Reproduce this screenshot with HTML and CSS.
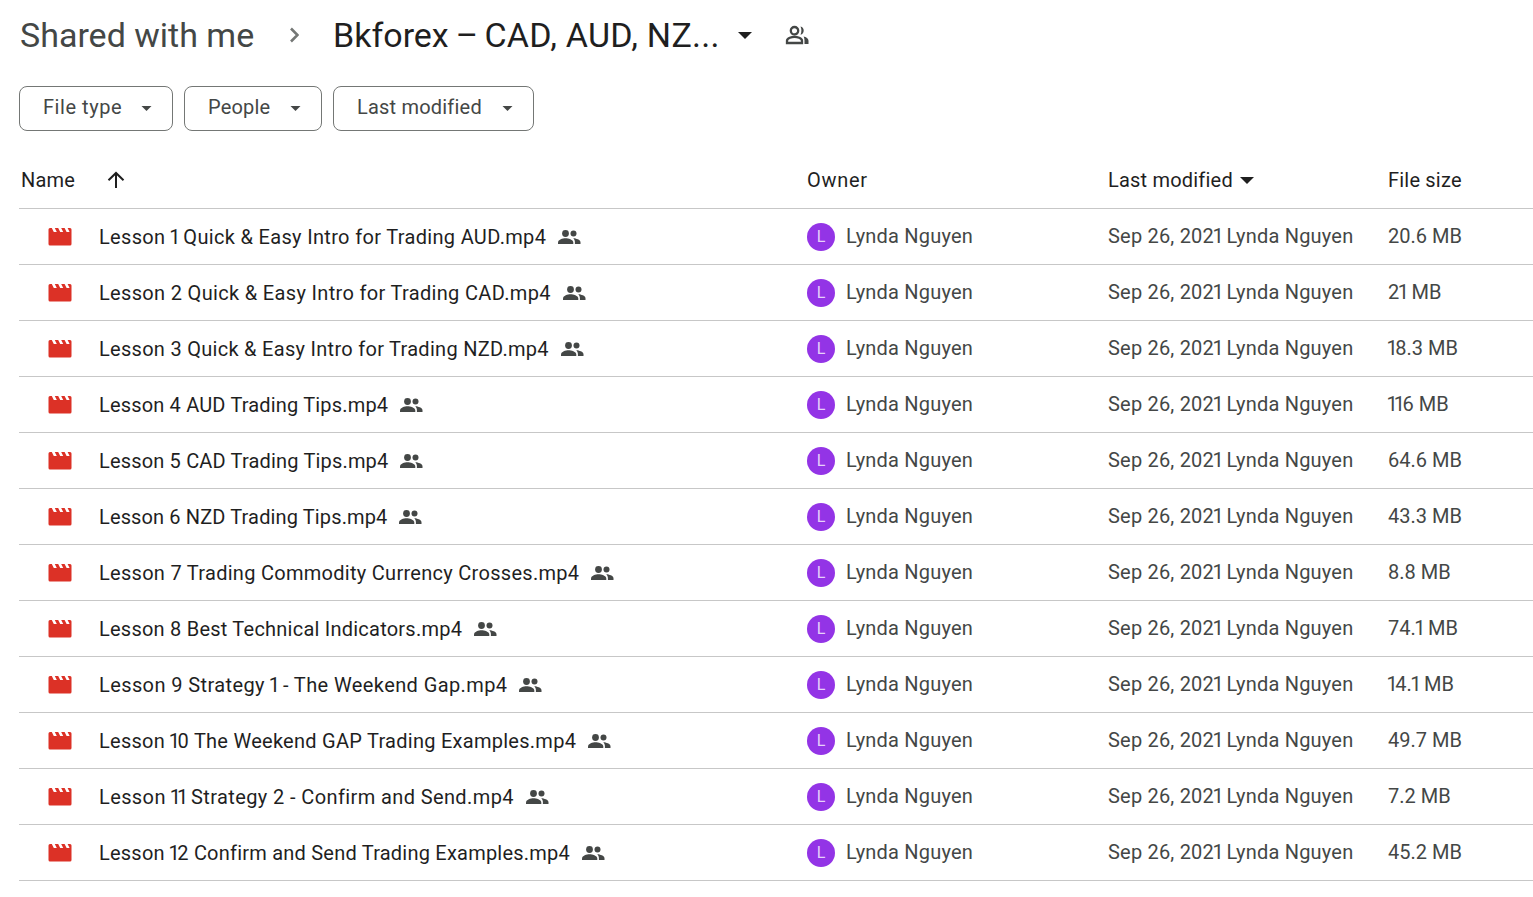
FILE: index.html
```html
<!DOCTYPE html>
<html lang="en">
<head>
<meta charset="utf-8">
<title>Bkforex – CAD, AUD, NZ…</title>
<link rel="stylesheet" href="styles.css">
</head>
<body>
<svg class="defs" width="0" height="0" aria-hidden="true">
  <symbol id="clap" viewBox="0 0 24 18"><path d="M2 0h1.800l2 4h3L6.800 0h3.400l2 4h3L13.200 0h3.400l2 4h3L19.600 0H22a1.500 1.500 0 0 1 1.500 1.500V16a1.500 1.500 0 0 1-1.500 1.500H2A1.500 1.500 0 0 1 .5 16V1.500A1.500 1.500 0 0 1 2 0z"/></symbol>
  <symbol id="group" viewBox="0 0 24 24"><circle cx="8.500" cy="8.500" r="3.400"/><circle cx="16.500" cy="8.500" r="3"/><path d="M1 19v-1.600C1 14.800 5.800 13.300 8.500 13.300s7.800 1.500 7.800 4.100V19z"/><path d="M16.200 13.300c2.800.1 7.300 1.400 7.300 4V19h-5.600v-1.800c0-1.500-.6-2.800-1.700-3.900z"/></symbol>
  <symbol id="caret" viewBox="0 0 10 5"><path d="M0 0h10L5 5z"/></symbol>
</svg>
<main class="page">
  <header class="crumbs">
    <span class="crumb-root">Shared with me</span>
    <svg class="crumb-sep" viewBox="0 0 10 16"><path d="M2 1.500 8.500 8 2 14.500" fill="none" stroke="currentColor" stroke-width="2.600"/></svg>
    <span class="crumb-current">Bkforex <span class="dash">–</span> <span class="tail">CAD, AUD, NZ...</span></span>
    <svg class="crumb-caret"><use href="#caret"/></svg>
    <svg class="crumb-people" viewBox="0 0 24 24"><path d="M9.500 4a3.700 3.700 0 1 1 0 7.400 3.700 3.700 0 0 1 0-7.400zM2 20v-2.200c0-2.800 5-4 7.500-4s7.500 1.200 7.500 4V20z" fill="none" stroke="currentColor" stroke-width="2.300"/><path d="M15.500 3.600c4.300.4 4.300 7.800 0 8.200 1.200-2.400 1.200-5.800 0-8.200zM18.500 13.500c2.800.6 5 1.900 5 4.300V21h-4v-3.500c0-1.500-.3-3-1-4z"/></svg>
  </header>
  <div class="filters">
    <button class="chip chip-type">File type<svg class="chip-caret"><use href="#caret"/></svg></button>
    <button class="chip chip-people">People<svg class="chip-caret"><use href="#caret"/></svg></button>
    <button class="chip chip-mod">Last modified<svg class="chip-caret"><use href="#caret"/></svg></button>
  </div>
  <section class="list">
    <div class="row head">
      <div class="hname"><span class="htext">Name</span><svg class="sort" viewBox="0 0 18 18"><path d="M9 17V2M1.500 9.200 9 2l7.500 7.200" fill="none" stroke="currentColor" stroke-width="2"/></svg></div>
      <div><span class="htext howner">Owner</span></div>
      <div class="hmod"><span class="htext">Last modified</span><svg class="hcaret"><use href="#caret"/></svg></div>
      <div><span class="htext">File size</span></div>
    </div>
    <div class="row"><div class="name"><svg class="clap"><use href="#clap"/></svg><span class="fname">Lesson <span class="one">1</span> Quick &amp; Easy Intro for Trading AUD.mp4</span><svg class="shared"><use href="#group"/></svg></div><div class="owner"><span class="avatar">L</span><span class="oname">Lynda Nguyen</span></div><div class="cell">Sep 26, 202<span class="one">1</span> Lynda Nguyen</div><div class="cell size">20.6 MB</div></div>
    <div class="row"><div class="name"><svg class="clap"><use href="#clap"/></svg><span class="fname">Lesson 2 Quick &amp; Easy Intro for Trading CAD.mp4</span><svg class="shared"><use href="#group"/></svg></div><div class="owner"><span class="avatar">L</span><span class="oname">Lynda Nguyen</span></div><div class="cell">Sep 26, 202<span class="one">1</span> Lynda Nguyen</div><div class="cell size">2<span class="one">1</span> MB</div></div>
    <div class="row"><div class="name"><svg class="clap"><use href="#clap"/></svg><span class="fname">Lesson 3 Quick &amp; Easy Intro for Trading NZD.mp4</span><svg class="shared"><use href="#group"/></svg></div><div class="owner"><span class="avatar">L</span><span class="oname">Lynda Nguyen</span></div><div class="cell">Sep 26, 202<span class="one">1</span> Lynda Nguyen</div><div class="cell size"><span class="one">1</span>8.3 MB</div></div>
    <div class="row"><div class="name"><svg class="clap"><use href="#clap"/></svg><span class="fname">Lesson 4 AUD Trading Tips.mp4</span><svg class="shared"><use href="#group"/></svg></div><div class="owner"><span class="avatar">L</span><span class="oname">Lynda Nguyen</span></div><div class="cell">Sep 26, 202<span class="one">1</span> Lynda Nguyen</div><div class="cell size"><span class="one">1</span><span class="one">1</span>6 MB</div></div>
    <div class="row"><div class="name"><svg class="clap"><use href="#clap"/></svg><span class="fname">Lesson 5 CAD Trading Tips.mp4</span><svg class="shared"><use href="#group"/></svg></div><div class="owner"><span class="avatar">L</span><span class="oname">Lynda Nguyen</span></div><div class="cell">Sep 26, 202<span class="one">1</span> Lynda Nguyen</div><div class="cell size">64.6 MB</div></div>
    <div class="row"><div class="name"><svg class="clap"><use href="#clap"/></svg><span class="fname">Lesson 6 NZD Trading Tips.mp4</span><svg class="shared"><use href="#group"/></svg></div><div class="owner"><span class="avatar">L</span><span class="oname">Lynda Nguyen</span></div><div class="cell">Sep 26, 202<span class="one">1</span> Lynda Nguyen</div><div class="cell size">43.3 MB</div></div>
    <div class="row"><div class="name"><svg class="clap"><use href="#clap"/></svg><span class="fname">Lesson 7 Trading Commodity Currency Crosses.mp4</span><svg class="shared"><use href="#group"/></svg></div><div class="owner"><span class="avatar">L</span><span class="oname">Lynda Nguyen</span></div><div class="cell">Sep 26, 202<span class="one">1</span> Lynda Nguyen</div><div class="cell size">8.8 MB</div></div>
    <div class="row"><div class="name"><svg class="clap"><use href="#clap"/></svg><span class="fname">Lesson 8 Best Technical Indicators.mp4</span><svg class="shared"><use href="#group"/></svg></div><div class="owner"><span class="avatar">L</span><span class="oname">Lynda Nguyen</span></div><div class="cell">Sep 26, 202<span class="one">1</span> Lynda Nguyen</div><div class="cell size">74.<span class="one">1</span> MB</div></div>
    <div class="row"><div class="name"><svg class="clap"><use href="#clap"/></svg><span class="fname">Lesson 9 Strategy <span class="one">1</span> - The Weekend Gap.mp4</span><svg class="shared"><use href="#group"/></svg></div><div class="owner"><span class="avatar">L</span><span class="oname">Lynda Nguyen</span></div><div class="cell">Sep 26, 202<span class="one">1</span> Lynda Nguyen</div><div class="cell size"><span class="one">1</span>4.<span class="one">1</span> MB</div></div>
    <div class="row"><div class="name"><svg class="clap"><use href="#clap"/></svg><span class="fname">Lesson <span class="one">1</span>0 The Weekend GAP Trading Examples.mp4</span><svg class="shared"><use href="#group"/></svg></div><div class="owner"><span class="avatar">L</span><span class="oname">Lynda Nguyen</span></div><div class="cell">Sep 26, 202<span class="one">1</span> Lynda Nguyen</div><div class="cell size">49.7 MB</div></div>
    <div class="row"><div class="name"><svg class="clap"><use href="#clap"/></svg><span class="fname">Lesson <span class="one">1</span><span class="one">1</span> Strategy 2 - Confirm and Send.mp4</span><svg class="shared"><use href="#group"/></svg></div><div class="owner"><span class="avatar">L</span><span class="oname">Lynda Nguyen</span></div><div class="cell">Sep 26, 202<span class="one">1</span> Lynda Nguyen</div><div class="cell size">7.2 MB</div></div>
    <div class="row"><div class="name"><svg class="clap"><use href="#clap"/></svg><span class="fname">Lesson <span class="one">1</span>2 Confirm and Send Trading Examples.mp4</span><svg class="shared"><use href="#group"/></svg></div><div class="owner"><span class="avatar">L</span><span class="oname">Lynda Nguyen</span></div><div class="cell">Sep 26, 202<span class="one">1</span> Lynda Nguyen</div><div class="cell size">45.2 MB</div></div>
  </section>
</main>
</body>
</html>
```
FILE: styles.css
```css
* { box-sizing: border-box; }
html, body { margin: 0; height: 100%; background: #fff; overflow: hidden; }
body { font-family: Roboto, "Open Sans", "Liberation Sans", sans-serif; color: #1f1f1f; }
.defs { position: absolute; }
.page { padding-left: 19px; }

.crumbs { display: flex; align-items: center; height: 70px; padding-left: 1px; font-size: 34px; }
.crumb-root { color: #444746; width: 234px; white-space: nowrap; }
.crumb-sep { width: 10px; height: 16px; margin-left: 35px; color: #747775; }
.crumb-current { margin-left: 34px; width: 386px; white-space: nowrap; }
.dash { letter-spacing: -2px; margin-left: -1.500px; }
.tail { letter-spacing: .27px; }
.crumb-caret { width: 14px; height: 7px; margin-left: 19px; fill: #1f1f1f; }
.crumb-people { width: 24px; height: 24px; margin-left: 33px; fill: #444746; color: #444746; }

.filters { display: flex; gap: 11px; margin-top: 16px; }
.chip { display: flex; align-items: center; justify-content: space-between; height: 45px; padding: 0 20px 3px 23px; background: #fff; border: 1px solid #747775; border-radius: 8px; font: inherit; font-size: 20px; letter-spacing: .2px; color: #444746; }
.chip-type { width: 154px; letter-spacing: .55px; }
.chip-people { width: 138px; }
.chip-mod { width: 201px; }
.chip-caret { width: 11px; height: 5px; fill: #444746; margin-top: 3px; }

.list { margin-top: 22px; }
.row { display: grid; grid-template-columns: 788px 301px 280px 145px; align-items: center; height: 56px; border-bottom: 1px solid #c7c7c7; font-size: 20px; letter-spacing: .2px; }
.head > div { display: flex; align-items: center; }
.htext { margin-top: -2px; }
.howner { letter-spacing: .7px; }
.hname { padding-left: 2px; }
.sort { width: 18px; height: 18px; margin-left: 32px; margin-top: -2px; color: #1f1f1f; }
.hcaret { width: 14px; height: 7px; margin-left: 7px; fill: #1f1f1f; }

.name { display: flex; align-items: center; min-width: 0; }
.clap { width: 24px; height: 18px; margin-left: 29px; margin-top: 1px; fill: #dc3126; flex: none; }
.fname { margin-left: 27px; white-space: nowrap; }
.shared { width: 24px; height: 24px; margin-left: 11px; fill: #444746; flex: none; }
.one { letter-spacing: -2.500px; margin-left: -1.500px; }

.row:nth-child(2) .fname { letter-spacing: .33px; }
.row:nth-child(3) .fname { letter-spacing: .33px; }
.row:nth-child(4) .fname { letter-spacing: .285px; }
.row:nth-child(5) .fname { letter-spacing: .17px; }
.row:nth-child(6) .fname { letter-spacing: .17px; }
.row:nth-child(7) .fname { letter-spacing: .13px; }
.row:nth-child(8) .fname { letter-spacing: .285px; }
.row:nth-child(9) .fname { letter-spacing: .23px; }
.row:nth-child(10) .fname { letter-spacing: .4px; }
.row:nth-child(11) .fname { letter-spacing: .265px; }
.row:nth-child(12) .fname { letter-spacing: .39px; }
.row:nth-child(13) .fname { letter-spacing: .22px; }

.owner { display: flex; align-items: center; color: #444746; }
.oname { margin-top: -2px; }
.avatar { display: flex; align-items: center; justify-content: center; width: 28px; height: 28px; margin-right: 11px; border-radius: 50%; background: #9334e6; color: #e6d0fa; font-size: 16px; letter-spacing: 0; }
.cell { color: #444746; white-space: nowrap; padding-bottom: 2px; }
.size { letter-spacing: 0; }
```
